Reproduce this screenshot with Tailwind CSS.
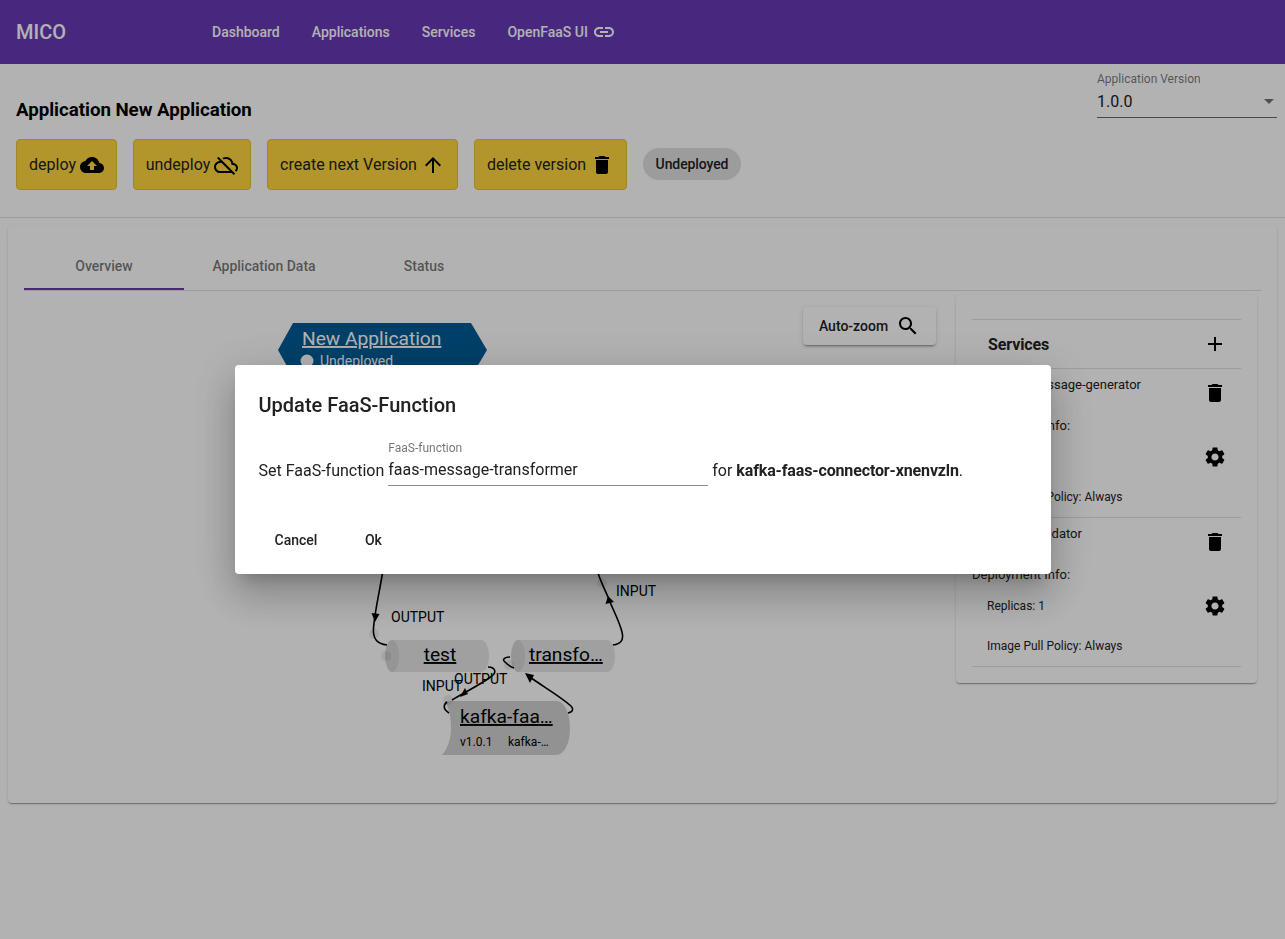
<!DOCTYPE html>
<html lang="en">
<head>
    <meta charset="UTF-8">
    <title>MICO</title>
    <script src="https://cdn.jsdelivr.net/npm/@tailwindcss/browser@4"></script>
</head>
<body class="h-[939px] overflow-hidden bg-white font-['Roboto',sans-serif] text-[#212121]">
    <!-- toolbar -->
    <header class="h-16 bg-[#673ab7] text-white flex items-center px-4">
        <span class="w-[180px] text-xl font-medium">MICO</span>
        <nav class="flex text-sm font-medium">
            <a class="px-4">Dashboard</a>
            <a class="px-4">Applications</a>
            <a class="px-4">Services</a>
            <a class="px-4 flex items-center gap-1">OpenFaaS UI
                <svg class="w-6 h-6 -my-1" fill="currentColor" viewBox="0 0 24 24"><path d="M3.9 12c0-1.71 1.39-3.1 3.1-3.1h4V7H7c-2.76 0-5 2.24-5 5s2.24 5 5 5h4v-1.9H7c-1.71 0-3.1-1.39-3.1-3.1zM8 13h8v-2H8v2zm9-6h-4v1.9h4c1.71 0 3.1 1.39 3.1 3.1s-1.39 3.1-3.1 3.1h-4V17h4c2.76 0 5-2.24 5-5s-2.24-5-5-5z"/></svg>
            </a>
        </nav>
    </header>

    <!-- application header -->
    <section class="h-[154px] border-b border-[#e0e0e0] flex justify-between pl-4 pr-2">
        <div class="pt-[35px]">
            <h3 class="h-[22px] leading-[22px] text-[18.72px] tracking-[-0.04px] font-bold text-black">Application New Application</h3>
            <div class="mt-[18px] flex items-center gap-4">
                <button class="w-[101px] h-[51px] flex items-center justify-center gap-1 bg-[#ffd740] border border-[#e6c13a] rounded text-base">deploy
                    <svg class="w-6 h-6" viewBox="0 0 24 24"><path d="M19.35 10.04C18.67 6.59 15.64 4 12 4 9.11 4 6.6 5.64 5.35 8.04 2.34 8.36 0 10.91 0 14c0 3.31 2.69 6 6 6h13c2.76 0 5-2.24 5-5 0-2.64-2.05-4.78-4.65-4.96zM14 13v4h-4v-4H7l5-5 5 5h-3z"/></svg>
                </button>
                <button class="w-[118px] h-[51px] flex items-center justify-center gap-1 bg-[#ffd740] border border-[#e6c13a] rounded text-base">undeploy
                    <svg class="w-6 h-6" viewBox="0 0 24 24"><path d="M24 15c0-2.64-2.05-4.78-4.65-4.96C18.67 6.59 15.64 4 12 4c-1.33 0-2.57.36-3.65.97l1.49 1.49C10.51 6.17 11.23 6 12 6c3.04 0 5.5 2.46 5.5 5.5v.5H19c1.66 0 3 1.34 3 3 0 .99-.48 1.85-1.21 2.4l1.41 1.41c1.09-.92 1.8-2.27 1.8-3.81zM4.41 3.86L3 5.27l2.77 2.77h-.42C2.34 8.36 0 10.91 0 14c0 3.31 2.69 6 6 6h11.73l2 2 1.41-1.41L4.41 3.86zM6 18c-2.21 0-4-1.79-4-4s1.79-4 4-4h1.73l8 8H6z"/></svg>
                </button>
                <button class="w-[191px] h-[51px] flex items-center justify-center gap-1 bg-[#ffd740] border border-[#e6c13a] rounded text-base">create next Version
                    <svg class="w-6 h-6" viewBox="0 0 24 24"><path d="M4 12l1.41 1.41L11 7.83V20h2V7.83l5.58 5.59L20 12l-8-8-8 8z"/></svg>
                </button>
                <button class="w-[153px] h-[51px] flex items-center justify-center gap-1 bg-[#ffd740] border border-[#e6c13a] rounded text-base">delete version
                    <svg class="w-6 h-6" viewBox="0 0 24 24"><path d="M6 19c0 1.1.9 2 2 2h8c1.1 0 2-.9 2-2V7H6v12zM19 4h-3.5l-1-1h-5l-1 1H5v2h14V4z"/></svg>
                </button>
                <span class="w-[98px] h-8 mb-[1px] flex items-center justify-center rounded-full bg-[#e0e0e0] text-sm tracking-[-0.1px] font-medium">Undeployed</span>
            </div>
        </div>
        <div class="w-[180px] pt-2">
            <div class="text-xs leading-[14px] text-black/55">Application Version</div>
            <div class="h-[32px] flex items-center justify-between border-b border-black/60 text-base">
                <span>1.0.0</span>
                <span class="mr-[3px] w-0 h-0 border-x-[5px] border-x-transparent border-t-[5px] border-t-black/55"></span>
            </div>
        </div>
    </section>

    <!-- main card -->
    <main class="mt-2 mx-2 h-[577px] bg-white rounded p-4 shadow-[0_2px_1px_-1px_rgba(0,0,0,.2),0_1px_1px_0_rgba(0,0,0,.14),0_1px_3px_0_rgba(0,0,0,.12)]">
        <div class="flex h-[49px] border-b border-[#e0e0e0] text-sm font-medium text-black/55">
            <div class="w-40 h-[48px] pt-[2px] flex items-center justify-center border-b-2 border-[#673ab7]">Overview</div>
            <div class="w-40 flex items-center justify-center">Application Data</div>
            <div class="w-40 flex items-center justify-center">Status</div>
        </div>
        <div class="flex pr-1">
            <!-- graph canvas -->
            <div class="relative w-[932px] h-[490px]">
                <svg class="absolute inset-0" width="932" height="490" viewBox="24 291 932 490" font-family="Roboto, sans-serif">
                    <path d="M293 323H471L487 350L471 377H293L278 350Z" fill="#005c96"/>
                    <text x="302" y="345" font-size="19.2" fill="#fff" text-decoration="underline">New Application</text>
                    <circle cx="307" cy="361" r="6.5" fill="#fff"/>
                    <text x="320" y="366" font-size="14" fill="#fff">Undeployed</text>

                    <!-- test -->
                    <path d="M392 640H481C486 640 489 648 489 656C489 664 486 672 481 672H392Z" fill="#e6e6e6"/>
                    <ellipse cx="392" cy="656" rx="7" ry="16" fill="#d6d6d6"/>
                    <text x="440" y="661" font-size="19.2" fill="#000" text-anchor="middle" text-decoration="underline">test</text>

                    <!-- transformer -->
                    <path d="M518 640H607C612 640 615 648 615 656C615 664 612 672 607 672H518Z" fill="#e6e6e6"/>
                    <ellipse cx="518" cy="656" rx="7" ry="16" fill="#d6d6d6"/>
                    <text x="529" y="661" font-size="19.2" fill="#000" text-decoration="underline">transfo…</text>

                    <!-- kafka-faas connector -->
                    <path d="M445 701H556C565 701 570 714 570 728C570 742 565 755 556 755H442C448 748 451 738 451 728C451 717 449 708 445 701Z" fill="#d2d2d2"/>
                    <text x="460" y="723" font-size="19.2" fill="#000" text-decoration="underline">kafka-faa…</text>
                    <text x="460" y="746" font-size="12" fill="#000">v1.0.1</text>
                    <text x="508" y="746" font-size="12" fill="#000">kafka-…</text>

                    <!-- edge anchors -->
                    <g fill="#000" fill-opacity=".07">
                        <circle cx="374" cy="634" r="5"/>
                        <circle cx="602" cy="583" r="5"/>
                        <circle cx="448" cy="700" r="5"/>
                        <circle cx="509" cy="665" r="5"/>
                        <circle cx="386" cy="656" r="5"/>
                    </g>

                    <!-- edges -->
                    <g fill="none" stroke="#000" stroke-width="1.6">
                        <path d="M383 570C379 595 375 610 373.500 628C372.500 640 378 644 387 645"/>
                        <path d="M613 645C621 644 624 640 622 632C619 620 612 608 608 597C604 588 600 580 597 570"/>
                        <path d="M488 667C495 667 497 672 492 676C480 685 465 692 452 700"/>
                        <path d="M447 702C443 705 443 709 449 713"/>
                        <path d="M510 657C504 657 502 660 505 662C508 665 511 667 514 668"/>
                        <path d="M527 675C542 686 560 696 571 706C574 709 573 712 568 713"/>
                    </g>
                    <path d="M375 622L371.500 613L379.500 614Z"/>
                    <path d="M608 596L605.500 604L614 602Z"/>
                    <path d="M460 697L465 688L468 694Z"/>
                    <path d="M525 673L534 675L530 683Z"/>
                    <g font-size="14" fill="#000">
                        <text x="391" y="622">OUTPUT</text>
                        <text x="616" y="596">INPUT</text>
                        <text x="422" y="691">INPUT</text>
                        <text x="454" y="684">OUTPUT</text>
                    </g>
                </svg>
                <button class="absolute left-[779px] top-4 h-[38px] w-[133px] flex items-center justify-center gap-2 bg-white rounded text-sm font-medium shadow-[0_3px_1px_-2px_rgba(0,0,0,.2),0_2px_2px_0_rgba(0,0,0,.14),0_1px_5px_0_rgba(0,0,0,.12)]">Auto-zoom
                    <svg class="w-6 h-6" viewBox="0 0 24 24"><path d="M15.5 14h-.79l-.28-.27C15.41 12.59 16 11.11 16 9.5 16 5.91 13.09 3 9.5 3S3 5.91 3 9.5 5.91 16 9.5 16c1.61 0 3.09-.59 4.23-1.57l.27.28v.79l5 4.99L20.49 19l-4.99-5zm-6 0C7.01 14 5 11.99 5 9.5S7.01 5 9.5 5 14 7.01 14 9.5 11.99 14 9.5 14z"/></svg>
                </button>
            </div>

            <!-- services panel -->
            <aside class="mt-1 w-[301px] h-[388px] bg-white rounded px-4 pt-6 shadow-[0_2px_1px_-1px_rgba(0,0,0,.2),0_1px_1px_0_rgba(0,0,0,.14),0_1px_3px_0_rgba(0,0,0,.12)]">
                <div class="h-[50px] border-y border-[#e0e0e0] pl-4 pr-[14px] flex items-center justify-between">
                    <span class="pt-[1px] text-base tracking-[-0.1px] font-bold">Services</span>
                    <svg class="w-6 h-6" viewBox="0 0 24 24"><path d="M19 13h-6v6h-2v-6H5v-2h6V5h2v6h6v2z"/></svg>
                </div>
                <div class="h-[149px] border-b border-[#e0e0e0] flex justify-between pr-[14px] text-[13px] leading-[15px]">
                    <div class="pt-2">
                        <div class="pl-[57px]">message-generator</div>
                        <div class="mt-[26px]">Deployment Info:</div>
                        <div class="mt-4 pl-[15px] text-xs">Replicas: 1</div>
                        <div class="mt-[25px] pl-[15px] text-xs leading-[15px]">Image Pull Policy: Always</div>
                    </div>
                    <div class="pt-3">
                        <svg class="w-6 h-6" viewBox="0 0 24 24"><path d="M6 19c0 1.1.9 2 2 2h8c1.1 0 2-.9 2-2V7H6v12zM19 4h-3.5l-1-1h-5l-1 1H5v2h14V4z"/></svg>
                        <svg class="w-6 h-6 mt-10" viewBox="0 0 24 24"><path d="M19.14 12.94c.04-.3.06-.61.06-.94 0-.32-.02-.64-.07-.94l2.03-1.58c.18-.14.23-.41.12-.61l-1.92-3.32c-.12-.22-.37-.29-.59-.22l-2.39.96c-.5-.38-1.03-.7-1.62-.94l-.36-2.54c-.04-.24-.24-.41-.48-.41h-3.84c-.24 0-.43.17-.47.41l-.36 2.54c-.59.24-1.13.57-1.62.94l-2.39-.96c-.22-.08-.47 0-.59.22L2.74 8.87c-.12.21-.08.47.12.61l2.03 1.58c-.05.3-.09.63-.09.94s.02.64.07.94l-2.03 1.58c-.18.14-.23.41-.12.61l1.92 3.32c.12.22.37.29.59.22l2.39-.96c.5.38 1.03.7 1.62.94l.36 2.54c.05.24.24.41.48.41h3.84c.24 0 .44-.17.47-.41l.36-2.54c.59-.24 1.13-.56 1.62-.94l2.39.96c.22.08.47 0 .59-.22l1.92-3.32c.12-.22.07-.47-.12-.61l-2.01-1.58zM12 15.6c-1.98 0-3.6-1.62-3.6-3.6s1.62-3.6 3.6-3.6 3.6 1.62 3.6 3.6-1.62 3.6-3.6 3.6z"/></svg>
                    </div>
                </div>
                <div class="h-[149px] border-b border-[#e0e0e0] flex justify-between pr-[14px] text-[13px] leading-[15px]">
                    <div class="pt-2">
                        <div class="pl-[60px]">validator</div>
                        <div class="mt-[26px]">Deployment Info:</div>
                        <div class="mt-4 pl-[15px] text-xs">Replicas: 1</div>
                        <div class="mt-[25px] pl-[15px] text-xs leading-[15px]">Image Pull Policy: Always</div>
                    </div>
                    <div class="pt-3">
                        <svg class="w-6 h-6" viewBox="0 0 24 24"><path d="M6 19c0 1.1.9 2 2 2h8c1.1 0 2-.9 2-2V7H6v12zM19 4h-3.5l-1-1h-5l-1 1H5v2h14V4z"/></svg>
                        <svg class="w-6 h-6 mt-10" viewBox="0 0 24 24"><path d="M19.14 12.94c.04-.3.06-.61.06-.94 0-.32-.02-.64-.07-.94l2.03-1.58c.18-.14.23-.41.12-.61l-1.92-3.32c-.12-.22-.37-.29-.59-.22l-2.39.96c-.5-.38-1.03-.7-1.62-.94l-.36-2.54c-.04-.24-.24-.41-.48-.41h-3.84c-.24 0-.43.17-.47.41l-.36 2.54c-.59.24-1.13.57-1.62.94l-2.39-.96c-.22-.08-.47 0-.59.22L2.74 8.87c-.12.21-.08.47.12.61l2.03 1.58c-.05.3-.09.63-.09.94s.02.64.07.94l-2.03 1.58c-.18.14-.23.41-.12.61l1.92 3.32c.12.22.37.29.59.22l2.39-.96c.5.38 1.03.7 1.62.94l.36 2.54c.05.24.24.41.48.41h3.84c.24 0 .44-.17.47-.41l.36-2.54c.59-.24 1.13-.56 1.62-.94l2.39.96c.22.08.47 0 .59-.22l1.92-3.32c.12-.22.07-.47-.12-.61l-2.01-1.58zM12 15.6c-1.98 0-3.6-1.62-3.6-3.6s1.62-3.6 3.6-3.6 3.6 1.62 3.6 3.6-1.62 3.6-3.6 3.6z"/></svg>
                    </div>
                </div>
            </aside>
        </div>
    </main>

    <!-- dialog backdrop -->
    <div class="fixed inset-0 bg-black/30 flex items-start justify-center pt-[365px]">
        <div class="w-[816px] h-[209px] bg-white rounded pt-6 px-6 pb-2 shadow-[0_11px_15px_-7px_rgba(0,0,0,.2),0_24px_38px_3px_rgba(0,0,0,.14),0_9px_46px_8px_rgba(0,0,0,.12)]">
            <h2 class="h-8 leading-8 text-xl font-medium">Update FaaS-Function</h2>
            <div class="mt-[20px] flex items-start text-base">
                <span class="mt-[18px] mr-1">Set FaaS-function</span>
                <div class="w-80 h-[47px] border-b border-black/45 -mt-[2px]">
                    <div class="text-xs leading-[14px] text-black/55 pt-[2px] h-[18px]">FaaS-function</div>
                    <div class="mt-[3px] leading-5">faas-message-transformer</div>
                </div>
                <span class="mt-[18px] ml-1">for <b class="font-bold tracking-[-0.14px]">kafka-faas-connector-xnenvzln</b>.</span>
            </div>
            <div class="mt-[36px] flex gap-2 text-sm font-medium">
                <button class="h-9 px-4 min-w-16">Cancel</button>
                <button class="h-9 px-4 min-w-16">Ok</button>
            </div>
        </div>
    </div>
</body>
</html>
